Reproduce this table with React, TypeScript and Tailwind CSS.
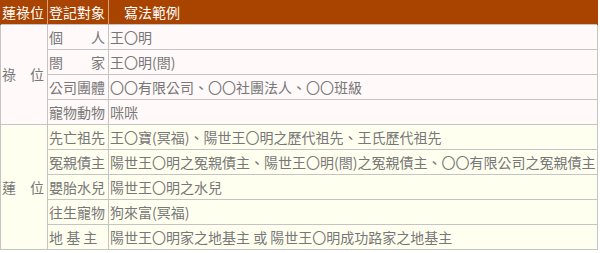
import React from "react";

const pink = "bg-[#fff9f9]";
const ivory = "bg-[#fffff0]";

const group1 = [
  ["個\u3000\u3000人", "王〇明"],
  ["閤\u3000\u3000家", "王〇明(閤)"],
  ["公司團體", "〇〇有限公司、〇〇社團法人、〇〇班級"],
  ["寵物動物", "咪咪"],
];
const group2 = [
  ["先亡祖先", "王〇寶(冥福)、陽世王〇明之歷代祖先、王氏歷代祖先"],
  ["冤親債主", "陽世王〇明之冤親債主、陽世王〇明(閤)之冤親債主、〇〇有限公司之冤親債主"],
  ["嬰胎水兒", "陽世王〇明之水兒"],
  ["往生寵物", "狗來富(冥福)"],
  ["地 基 主", "陽世王〇明家之地基主 或 陽世王〇明成功路家之地基主"],
];

const td = "border border-[#c4c4c4] px-[1px] py-0 h-[25px] whitespace-nowrap align-middle";

export default function App() {
  return (
    <div
      className="w-[600px] h-[253px] bg-white text-[14px] leading-[18px] text-[#777]"
      style={{ fontFamily: '"Noto Sans CJK TC", "Noto Sans", sans-serif' }}
    >
      <table className="border-collapse table-fixed w-[598px]">
        <colgroup>
          <col className="w-[47px]" />
          <col className="w-[61px]" />
          <col />
        </colgroup>
        <thead>
          <tr className="bg-[#a84300] text-white">
            <th className="h-[24px] px-[1px] font-normal text-left border-l border-[#a84300] border-r-[1px] border-r-[#d9a077]">蓮祿位</th>
            <th className="h-[24px] px-[1px] font-normal text-left border-r-[1px] border-r-[#d9a077]">登記對象</th>
            <th className="h-[24px] px-[1px] font-normal text-left border-r border-r-[#a84300]">{"\u3000寫法範例"}</th>
          </tr>
        </thead>
        <tbody>
          {group1.map(([a, b], i) => (
            <tr key={"g1" + i} className={pink}>
              {i === 0 && (
                <td rowSpan={4} className={td}>
                  {"祿\u3000位"}
                </td>
              )}
              <td className={td}>{a}</td>
              <td className={td}>{b}</td>
            </tr>
          ))}
          {group2.map(([a, b], i) => (
            <tr key={"g2" + i} className={ivory}>
              {i === 0 && (
                <td rowSpan={5} className={td}>
                  {"蓮\u3000位"}
                </td>
              )}
              <td className={td}>{a}</td>
              <td className={td}>{b}</td>
            </tr>
          ))}
        </tbody>
      </table>
    </div>
  );
}
